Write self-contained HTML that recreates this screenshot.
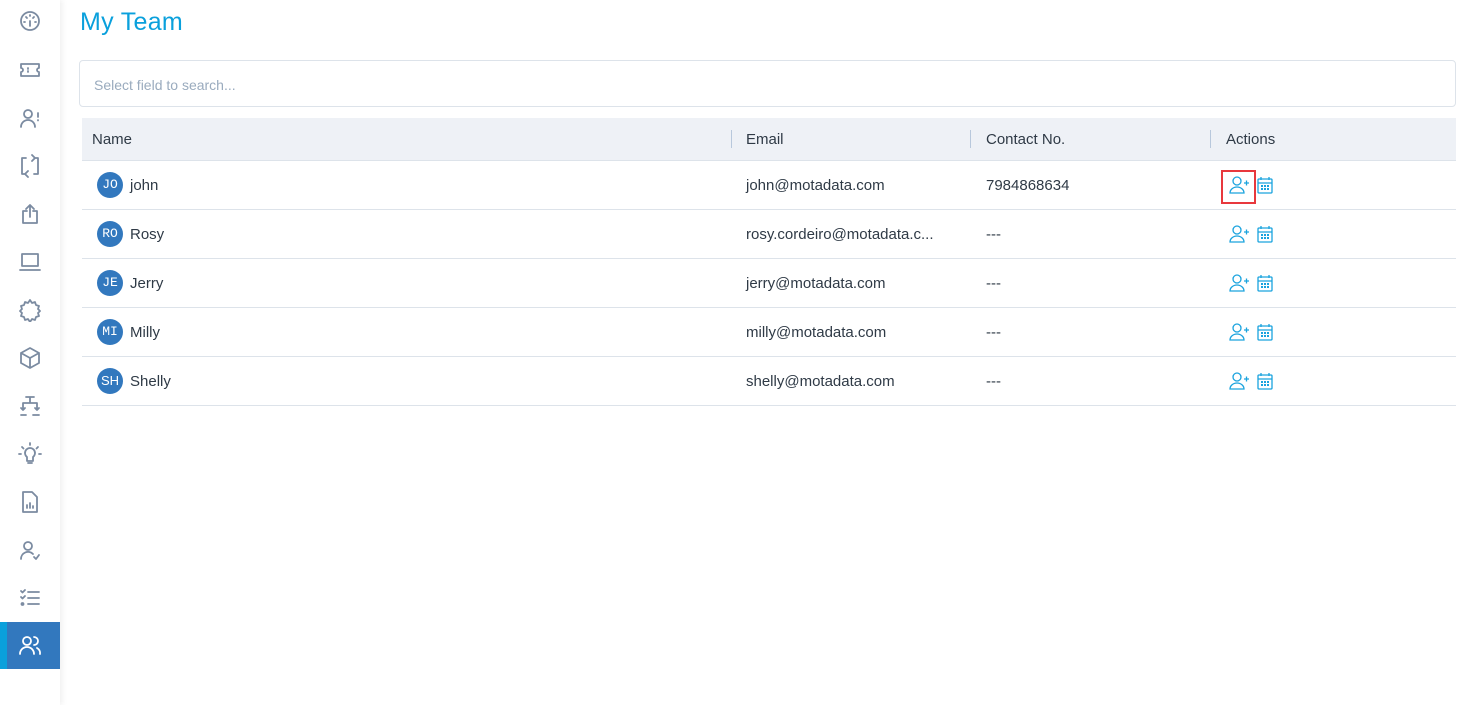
<!DOCTYPE html><html><head><style>
body{margin:0;width:1472px;height:705px;background:#fff;font-family:"Liberation Sans",sans-serif;position:relative;overflow:hidden}
.sb{position:absolute;left:0;top:0;width:60px;height:705px;background:#fff;box-shadow:2px 0 6px rgba(0,0,0,.07)}
.ic{position:absolute;left:18px;width:24px;height:24px}
.ic svg{width:24px;height:24px;fill:none;stroke:#7b8ba1;stroke-width:1.8;stroke-linecap:round;stroke-linejoin:round}
.act{position:absolute;left:0;top:622px;width:60px;height:47px;background:#3278be}
.act:before{content:"";position:absolute;left:0;top:0;width:7px;height:47px;background:#0aa0dc}
h1{position:absolute;left:80px;top:8px;margin:0;font-size:25px;font-weight:normal;color:#0aa0dc;letter-spacing:.3px}
.search{position:absolute;left:79px;top:60px;width:1377px;height:47px;border:1px solid #dde3ea;border-radius:4px;box-sizing:border-box;font-size:14px;color:#9aabbe;padding:16px 14px}
.th{position:absolute;left:82px;top:118px;width:1374px;height:42px;background:#eef1f6;border-bottom:1px solid #dde3ea;font-size:15px;color:#2f3a46}
.th span{position:absolute;top:13px}
.sep{position:absolute;top:12px;width:1px;height:18px;background:#b8c8dc}
.row{position:absolute;left:82px;width:1374px;height:48px;border-bottom:1px solid #dde3ea;font-size:15px;color:#2f3a46}
.row span{position:absolute;top:16px}
.av{position:absolute;left:15px;top:11px;width:26px;height:26px;border-radius:50%;background:#3278be;color:#fff;font-family:"Liberation Mono",monospace;font-size:13px;text-align:center;line-height:26px}
.a1{position:absolute;left:1147px;top:14px;width:20px;height:20px}
.a2{position:absolute;left:1175px;top:15px;width:16px;height:18px}
.hl{position:absolute;left:1221px;top:170px;width:35px;height:34px;border:2px solid #e8383d;box-sizing:border-box}
</style></head><body>
<div class="sb">
<div class="ic" style="top:9px"><svg viewBox="0 0 24 24"><circle cx="12" cy="12" r="9"/><path d="M12 12v5M8 8l1 1M16 8l-1 1M6 13h1M17 13h1M12 6v1"/></svg></div>
<div class="ic" style="top:58px"><svg viewBox="0 0 24 24"><path d="M3 6h18v4a2 2 0 000 4v4H3v-4a2 2 0 000-4z"/><path d="M10 10v1M10 13v1"/></svg></div>
<div class="ic" style="top:106px"><svg viewBox="0 0 24 24"><circle cx="10" cy="8" r="4"/><path d="M3 21a7 7 0 0114 0M20 7v4M20 14v.5"/></svg></div>
<div class="ic" style="top:154px"><svg viewBox="0 0 24 24"><path d="M8 4H4v16h3M16 20h4V4h-3M14 1l3 3-3 3M10 17l-3 3 3 3"/></svg></div>
<div class="ic" style="top:202px"><svg viewBox="0 0 24 24"><path d="M9 9H5v12h14V9h-4M12 15V3M8 7l4-4 4 4"/></svg></div>
<div class="ic" style="top:250px"><svg viewBox="0 0 24 24"><rect x="4" y="4" width="16" height="12"/><path d="M2 20h20"/></svg></div>
<div class="ic" style="top:298px"><svg viewBox="0 0 24 24"><path d="M12 2l2 3 3-1 1 3 3 1-1 3 2 2-2 2 1 3-3 1-1 3-3-1-2 3-2-3-3 1-1-3-3-1 1-3-2-2 2-2-1-3 3-1 1-3 3 1z"/></svg></div>
<div class="ic" style="top:346px"><svg viewBox="0 0 24 24"><path d="M12 2l9 5v10l-9 5-9-5V7zM3 7l9 5 9-5M12 12v10"/></svg></div>
<div class="ic" style="top:394px"><svg viewBox="0 0 24 24"><path d="M8 3h8M12 3v6M5 9h14M5 9v7M19 9v7M3 14l2 2 2-2M17 14l2 2 2-2M3 21h5M15 21h6"/></svg></div>
<div class="ic" style="top:442px"><svg viewBox="0 0 24 24"><path d="M9 15a5 5 0 116 0v4H9zM10 21h4M12 1v2M4 5l1.5 1.5M20 5l-1.5 1.5M1 12h2M21 12h2"/></svg></div>
<div class="ic" style="top:490px"><svg viewBox="0 0 24 24"><path d="M5 2h9l5 5v15H5zM9 18v-3M12 18v-5M15 18v-2"/></svg></div>
<div class="ic" style="top:538px"><svg viewBox="0 0 24 24"><circle cx="10" cy="8" r="4"/><path d="M3 21a7 7 0 0112-5M16 19l2 2 3-4"/></svg></div>
<div class="ic" style="top:586px"><svg viewBox="0 0 24 24"><path d="M3 5l1.5 1.5L7 4M3 11l1.5 1.5L7 10M10 6h11M10 12h11M10 18h11"/><circle cx="4.5" cy="18" r="1"/></svg></div>
<div class="act"><div class="ic" style="top:11px"><svg viewBox="0 0 24 24" style="stroke:#fff"><circle cx="9" cy="8" r="4"/><path d="M2 21a7 7 0 0114 0M16 4a4 4 0 010 8M19 15a6 6 0 013 6"/></svg></div></div>
</div>
<h1>My Team</h1>
<div class="search">Select field to search...</div>
<div class="th"><span style="left:10px">Name</span><div class="sep" style="left:649px"></div><span style="left:664px">Email</span><div class="sep" style="left:888px"></div><span style="left:904px">Contact No.</span><div class="sep" style="left:1128px"></div><span style="left:1144px">Actions</span></div>
<svg width="0" height="0" style="position:absolute"><defs>
<symbol id="up" viewBox="0 0 20 20"><g fill="none" stroke="#1aa3de" stroke-width="1.3"><circle cx="8" cy="6" r="4"/><path d="M1 18a7 6 0 0114 0zM15 8h5M17.5 5.5v5"/></g></symbol>
<symbol id="cal" viewBox="0 0 16 18"><g fill="none" stroke="#1aa3de" stroke-width="1.3"><rect x="1" y="3" width="14" height="14" rx="1"/><path d="M1 7h14M4 1v3M12 1v3"/></g><g fill="#1aa3de"><rect x="4" y="9" width="2" height="2"/><rect x="7" y="9" width="2" height="2"/><rect x="10" y="9" width="2" height="2"/><rect x="4" y="12" width="2" height="2"/><rect x="7" y="12" width="2" height="2"/><rect x="10" y="12" width="2" height="2"/></g></symbol></defs></svg>
<div class="row" style="top:161px"><div class="av">JO</div><span style="left:48px">john</span><span style="left:664px">john@motadata.com</span><span style="left:904px">7984868634</span><svg class="a1"><use href="#up"/></svg><svg class="a2"><use href="#cal"/></svg></div>
<div class="row" style="top:210px"><div class="av">RO</div><span style="left:48px">Rosy</span><span style="left:664px">rosy.cordeiro@motadata.c...</span><span style="left:904px">---</span><svg class="a1"><use href="#up"/></svg><svg class="a2"><use href="#cal"/></svg></div>
<div class="row" style="top:259px"><div class="av">JE</div><span style="left:48px">Jerry</span><span style="left:664px">jerry@motadata.com</span><span style="left:904px">---</span><svg class="a1"><use href="#up"/></svg><svg class="a2"><use href="#cal"/></svg></div>
<div class="row" style="top:308px"><div class="av">MI</div><span style="left:48px">Milly</span><span style="left:664px">milly@motadata.com</span><span style="left:904px">---</span><svg class="a1"><use href="#up"/></svg><svg class="a2"><use href="#cal"/></svg></div>
<div class="row" style="top:357px"><div class="av" style="font-family:'Liberation Sans',sans-serif">SH</div><span style="left:48px">Shelly</span><span style="left:664px">shelly@motadata.com</span><span style="left:904px">---</span><svg class="a1"><use href="#up"/></svg><svg class="a2"><use href="#cal"/></svg></div>
<div class="hl"></div>
</body></html>
